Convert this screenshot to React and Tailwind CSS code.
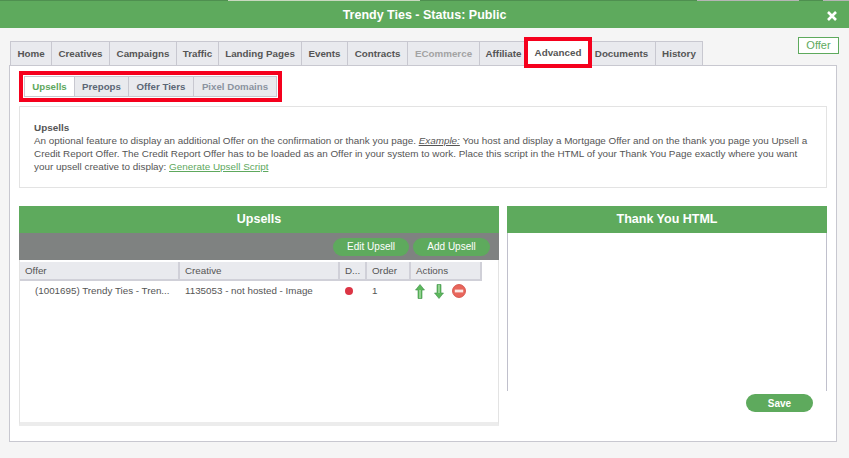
import React from 'react'

const tabs = [
  { name: 'Home', w: 'w-[42px]' },
  { name: 'Creatives', w: 'w-[58px]' },
  { name: 'Campaigns', w: 'w-[67px]' },
  { name: 'Traffic', w: 'w-[42px]' },
  { name: 'Landing Pages', w: 'w-[83px]' },
  { name: 'Events', w: 'w-[46px]' },
  { name: 'Contracts', w: 'w-[60px]' },
  { name: 'ECommerce', w: 'w-[72px]', off: true },
  { name: 'Affiliate', w: 'w-[48px]' },
  { name: 'Advanced', w: 'w-[60px]', active: true },
  { name: 'Documents', w: 'w-[68px]' },
  { name: 'History', w: 'w-[47px]' },
]

const subTabs = [
  { name: 'Upsells', w: 'w-[50px]', cls: 'bg-white text-[#5ea85d]' },
  { name: 'Prepops', w: 'w-[54px]', cls: 'bg-[#e9eaee] text-[#5b6675]' },
  { name: 'Offer Tiers', w: 'w-[65px]', cls: 'bg-[#e9eaee] text-[#5b6675]' },
  { name: 'Pixel Domains', w: 'w-[82px]', cls: 'bg-[#e9eaee] text-[#8b93a0]' },
]

const columns = [
  { name: 'Offer', w: 'w-[160px]' },
  { name: 'Creative', w: 'w-[160px]' },
  { name: 'D...', w: 'w-[27px]' },
  { name: 'Order', w: 'w-[44px]' },
  { name: 'Actions', w: 'w-[71px]' },
]

const Arrow = ({ down }) => (
  <svg width="10" height="15" viewBox="0 0 10 15" className={down ? 'rotate-180' : ''}>
    <path d="M5 0.5 L9.5 6 L7 6 L7 14.5 L3 14.5 L3 6 L0.5 6 Z" fill="#5cb85c" stroke="#3f8f4a" strokeWidth="0.6" />
    <path d="M4.4 6 L5.6 6 L5.6 14 L4.4 14 Z" fill="#b9e6b5" />
  </svg>
)

const RemoveIcon = () => (
  <svg width="14" height="14" viewBox="0 0 14 14" className="ml-[-1px]">
    <circle cx="7" cy="7" r="6.5" fill="#e8665c" stroke="#d0473f" strokeWidth="0.8" />
    <rect x="2.8" y="5.6" width="8.4" height="2.8" fill="#fbe9e6" />
  </svg>
)

const App = () => {
  return (
    <div className="w-[849px] h-[458px] overflow-hidden bg-[#f5f5f5] text-[9.9px] font-['Liberation_Sans',Arial,sans-serif] text-[#555]">
      {/* page behind the dialog, only one pixel row shows */}
      <div className="h-[1px] flex bg-[#4f8f50]">
        <div className="w-[228px]"></div>
        <div className="w-[192px] bg-[#c9d8c0]"></div>
        <div className="w-[277px]"></div>
        <div className="w-[102px] bg-[#b5b5b5]"></div>
        <div className="w-[24px]"></div>
        <div className="w-[26px] bg-[#b5b5b5]"></div>
      </div>
      {/* Header */}
      <div className="h-[27px] bg-[#5eaa5d] flex items-center relative">
        <div className="w-full text-center text-white font-bold text-[12.5px] pt-[2px]">Trendy Ties - Status: Public</div>
        <svg width="10" height="10" viewBox="0 0 10 10" className="absolute right-[12px] top-[10px]">
          <path d="M1 1 L9 9 M9 1 L1 9" stroke="#fff" strokeWidth="2.6" />
        </svg>
      </div>

      <div className="pl-[9px] pt-[8px] w-[837px]">
        {/* Tabs */}
        <div className="flex justify-between items-start h-[29px]">
          <div className="flex items-start pt-[5px] pl-[1px]">
            {tabs.map(tab => (
              <div
                key={tab.name}
                className={`${tab.w} flex items-center justify-center font-bold text-[9.8px] pt-[1px] ${
                  tab.active
                    ? 'h-[23px] bg-white text-[#555] relative z-10 outline-4 outline-[#f5001d]'
                    : tab.off
                      ? 'h-[24px] bg-[#e9eaee] text-[#a3a3a3] border-t border-r border-[#c8c8d0]'
                      : 'h-[24px] bg-[#e9eaee] text-[#555] border-t border-r border-[#c8c8d0] first:border-l'
                }`}
              >
                {tab.name}
              </div>
            ))}
          </div>
          <div className="w-[41px] h-[17px] mr-[-2px] mt-[1px] border border-[#5eaa5d] bg-white text-[#5eaa5d] flex items-center justify-center text-[11px]">
            Offer
          </div>
        </div>

        {/* Panel */}
        <div className="h-[377px] bg-white border border-[#c8c8d0] px-[9px] pt-[10px]">
          <div className="flex ml-[5px] w-max border border-[#c8c8d0] outline-4 outline-offset-[1px] outline-[#f5001d]">
            {subTabs.map(tab => (
              <div
                key={tab.name}
                className={`${tab.w} h-[19px] pt-[1px] flex items-center justify-center font-bold text-[9.7px] border-r border-[#c8c8d0] last:border-r-0 ${tab.cls}`}
              >
                {tab.name}
              </div>
            ))}
          </div>

          {/* Info */}
          <div className="mt-[9px] h-[82px] border border-[#e3e3e3] pl-[14px] pr-[10px] pt-[14px] leading-[13px] whitespace-nowrap">
            <div className="font-bold">Upsells</div>
            <div>
              An optional feature to display an additional Offer on the confirmation or thank you page.{' '}
              <span className="italic underline">Example:</span> You host and display a Mortgage Offer and on the thank you page you Upsell a
            </div>
            <div>
              Credit Report Offer. The Credit Report Offer has to be loaded as an Offer in your system to work. Place this script in the HTML of your Thank You Page exactly where you want
            </div>
            <div>
              your upsell creative to display: <span className="text-[#5ea85d] underline">Generate Upsell Script</span>
            </div>
          </div>

          <div className="flex gap-[8px] mt-[18px]">
            {/* Upsells table */}
            <div className="w-[480px]">
              <div className="h-[27px] bg-[#5eaa5d] flex items-center justify-center text-white font-bold text-[12.5px]">Upsells</div>
              <div className="h-[27px] bg-[#7f8281] flex items-center justify-end gap-[4px] pr-[9px]">
                <button className="w-[76px] h-[18px] rounded-full bg-[#5eaa5d] text-white text-[10px]">Edit Upsell</button>
                <button className="w-[77px] h-[18px] rounded-full bg-[#5eaa5d] text-white text-[10px]">Add Upsell</button>
              </div>
              <div className="h-[166px] border-l border-[#e3e3e3] border-r border-b-4 border-b-[#ececec] bg-white">
                <div className="flex h-[21px] pt-[2px]">
                  {columns.map(col => (
                    <div
                      key={col.name}
                      className={`${col.w} bg-[#e9eaee] border-r-2 border-b-2 border-[#d0d0d8] pl-[5px] leading-[17px] text-[9.8px]`}
                    >
                      {col.name}
                    </div>
                  ))}
                </div>
                <div className="flex h-[20px] items-center text-[9.8px]">
                  <div className="w-[160px] pl-[15px] whitespace-nowrap">(1001695) Trendy Ties - Tren...</div>
                  <div className="w-[160px] pl-[5px] whitespace-nowrap">1135053 - not hosted - Image</div>
                  <div className="w-[27px] flex justify-center pr-[9px]">
                    <span className="w-[8px] h-[8px] rounded-full bg-[#dc3545]"></span>
                  </div>
                  <div className="w-[44px] pl-[5px]">1</div>
                  <div className="flex items-center gap-[9px] pl-[4px]">
                    <Arrow />
                    <Arrow down />
                    <RemoveIcon />
                  </div>
                </div>
              </div>
            </div>

            {/* Thank you HTML */}
            <div className="w-[320px]">
              <div className="h-[27px] bg-[#5eaa5d] flex items-center justify-center text-white font-bold text-[12.5px]">Thank You HTML</div>
              <div className="h-[158px] border-l border-r border-[#c0c0cc]"></div>
              <div className="flex justify-end pr-[14px] mt-[3px]">
                <button className="w-[67px] h-[18px] rounded-full bg-[#5eaa5d] text-white font-bold text-[10px]">Save</button>
              </div>
            </div>
          </div>
        </div>
      </div>
    </div>
  )
}

export default App
